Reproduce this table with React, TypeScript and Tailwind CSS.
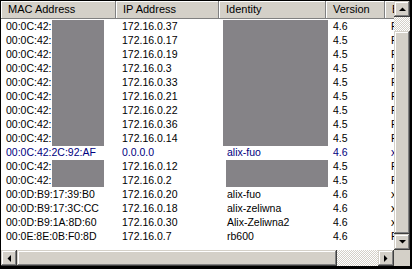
import React from "react";

type Row = {
  mac: string;
  ip: string;
  identity: string;
  version: string;
  board: string;
  selected?: boolean;
};

// Neighbor list; hidden cells are covered by grey blocks below
const rows: Row[] = [
  { mac: "00:0C:42:", ip: "172.16.0.37", identity: "", version: "4.6", board: "RB" },
  { mac: "00:0C:42:", ip: "172.16.0.17", identity: "", version: "4.5", board: "RB" },
  { mac: "00:0C:42:", ip: "172.16.0.19", identity: "", version: "4.5", board: "RB" },
  { mac: "00:0C:42:", ip: "172.16.0.3", identity: "", version: "4.5", board: "RB" },
  { mac: "00:0C:42:", ip: "172.16.0.33", identity: "", version: "4.5", board: "RB" },
  { mac: "00:0C:42:", ip: "172.16.0.21", identity: "", version: "4.5", board: "RB" },
  { mac: "00:0C:42:", ip: "172.16.0.22", identity: "", version: "4.5", board: "RB" },
  { mac: "00:0C:42:", ip: "172.16.0.36", identity: "", version: "4.5", board: "RB" },
  { mac: "00:0C:42:", ip: "172.16.0.14", identity: "", version: "4.5", board: "RB" },
  { mac: "00:0C:42:2C:92:AF", ip: "0.0.0.0", identity: "alix-fuo", version: "4.6", board: "x86", selected: true },
  { mac: "00:0C:42:", ip: "172.16.0.12", identity: "", version: "4.5", board: "RB" },
  { mac: "00:0C:42:", ip: "172.16.0.2", identity: "", version: "4.5", board: "RB" },
  { mac: "00:0D:B9:17:39:B0", ip: "172.16.0.20", identity: "alix-fuo", version: "4.6", board: "x86" },
  { mac: "00:0D:B9:17:3C:CC", ip: "172.16.0.18", identity: "alix-zeliwna", version: "4.6", board: "x86" },
  { mac: "00:0D:B9:1A:8D:60", ip: "172.16.0.30", identity: "Alix-Zeliwna2", version: "4.6", board: "x86" },
  { mac: "00:0E:8E:0B:F0:8D", ip: "172.16.0.7", identity: "rb600", version: "4.6", board: "RB" },
];

const raised =
  "bg-[#d4d0c8] shadow-[inset_-1px_-1px_#404040,inset_1px_1px_#d4d0c8,inset_-2px_-2px_#808080,inset_2px_2px_#ffffff]";
const checker =
  "bg-[image:repeating-conic-gradient(#ffffff_0_25%,#d4d0c8_0_50%)] bg-[length:2px_2px]";

function Arrow({ dir }: { dir: "up" | "down" | "left" | "right" }) {
  const pts = {
    up: "0,4 7,4 3.5,0.5",
    down: "0,0 7,0 3.5,3.5",
    left: "4,0 4,7 0.5,3.5",
    right: "0,0 0,7 3.5,3.5",
  }[dir];
  const vertical = dir === "up" || dir === "down";
  return (
    <svg width={vertical ? 7 : 4} height={vertical ? 4 : 7} viewBox={vertical ? "0 0 7 4" : "0 0 4 7"}>
      <polygon points={pts} fill="#000" />
    </svg>
  );
}

function HeaderCell({ label, width }: { label: string; width: string }) {
  return (
    <div className={`${width} h-full shrink-0 flex items-center pl-[7px] border-r border-[#808080] shadow-[inset_1px_1px_#ffffff] overflow-hidden whitespace-nowrap`}>
      {label}
    </div>
  );
}

export default function App() {
  return (
    <div className="w-[412px] h-[269px] bg-black pt-px pl-px pr-[2px] pb-[3px] font-['Liberation_Sans',Arial,sans-serif] text-[10.5px] text-black">
      <div className="w-full h-full grid grid-cols-[1fr_16px] grid-rows-[1fr_16px] bg-white">
        {/* list area */}
        <div className="relative overflow-hidden flex flex-col">
          <div className="h-[18px] shrink-0 flex bg-[#d4d0c8] border-b border-[#808080] text-[11px]">
            <HeaderCell label="MAC Address" width="w-[115px]" />
            <HeaderCell label="IP Address" width="w-[103px]" />
            <HeaderCell label="Identity" width="w-[107px]" />
            <HeaderCell label="Version" width="w-[59px]" />
            <HeaderCell label="Board" width="w-[60px]" />
          </div>
          <div className="relative pt-[1px]">
            {rows.map((r, i) => (
              <div
                key={i}
                className={`h-[14px] flex items-center whitespace-nowrap ${r.selected ? "text-[#000080]" : ""}`}
              >
                <div className="w-[115px] shrink-0 pl-[5px]">{r.mac}</div>
                <div className="w-[103px] shrink-0 pl-[6px]">{r.ip}</div>
                <div className="w-[107px] shrink-0 pl-[8px]">{r.identity}</div>
                <div className="w-[59px] shrink-0 pl-[7px]">{r.version}</div>
                <div className="w-[60px] shrink-0 pl-[6px]">{r.board}</div>
              </div>
            ))}
            {/* grey blocks over hidden values */}
            <div className="absolute left-[51px] top-px w-[52px] h-[126px] bg-[#858387]" />
            <div className="absolute left-[51px] top-[141px] w-[52px] h-[27px] bg-[#858387]" />
            <div className="absolute left-[222px] top-px w-[105px] h-[126px] bg-[#858387]" />
            <div className="absolute left-[225px] top-[141px] w-[102px] h-[27px] bg-[#858387]" />
          </div>
        </div>

        {/* vertical scrollbar */}
        <div className="flex flex-col">
          <div className={`h-[16px] shrink-0 flex items-center justify-center ${raised}`}>
            <Arrow dir="up" />
          </div>
          <div className={`h-[14px] shrink-0 ${checker}`} />
          <div className={`flex-1 ${raised}`} />
          <div className={`h-[16px] shrink-0 flex items-center justify-center ${raised}`}>
            <Arrow dir="down" />
          </div>
        </div>

        {/* horizontal scrollbar */}
        <div className="flex">
          <div className={`w-[16px] shrink-0 flex items-center justify-center ${raised}`}>
            <Arrow dir="left" />
          </div>
          <div className={`w-[320px] shrink-0 ${raised}`} />
          <div className={`flex-1 ${checker}`} />
          <div className={`w-[16px] shrink-0 flex items-center justify-center ${raised}`}>
            <Arrow dir="right" />
          </div>
        </div>
        <div className="bg-[#d4d0c8]" />
      </div>
    </div>
  );
}
